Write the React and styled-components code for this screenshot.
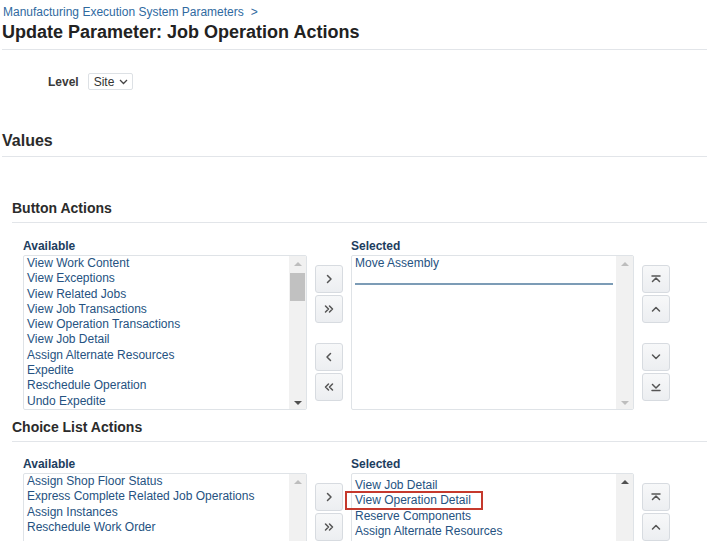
import styled, { createGlobalStyle } from "styled-components";

const GlobalStyle = createGlobalStyle`
  body {
    margin: 0;
    background: #fff;
    font-family: "Liberation Sans", Arial, sans-serif;
  }
`;

const Page = styled.div`
  padding: 5px 0 0 2px;
  height: 536px;
  overflow: hidden;
`;

const Breadcrumb = styled.div`
  font-size: 12px;
  line-height: 15px;
  color: #2f6a9f;
  padding-left: 1px;
  span {
    margin-left: 7px;
  }
`;

const Title = styled.h1`
  margin: 1px 0 0;
  font-size: 18px;
  line-height: 22px;
  font-weight: bold;
  color: #222;
  padding-bottom: 6px;
  border-bottom: 1px solid #e2e5e9;
`;

const LevelRow = styled.div`
  display: flex;
  align-items: center;
  gap: 9px;
  margin-top: 23px;
  padding-left: 46px;
  height: 17px;
`;

const FieldLabel = styled.label`
  font-size: 12px;
  font-weight: bold;
  color: #3a3a3a;
`;

const Select = styled.div`
  display: flex;
  align-items: center;
  gap: 5px;
  height: 17px;
  box-sizing: border-box;
  padding: 0 4px 0 5px;
  border: 1px solid #dde1e5;
  border-radius: 2px;
  font-size: 12px;
  color: #333;
`;

const SectionHeading = styled.h2`
  margin: ${(p) => p.$top}px 0 0;
  font-size: ${(p) => p.$size}px;
  line-height: ${(p) => p.$size + 4}px;
  font-weight: bold;
  color: #2b2b2b;
  padding-bottom: 5px;
  border-bottom: 1px solid #e2e5e9;
`;

const SubSection = styled.section`
  margin-left: 10px;
`;

const Shuttle = styled.div`
  display: grid;
  grid-template-columns: 284px 28px 283px 28px;
  column-gap: 8px;
  margin-top: ${(p) => p.$top}px;
  padding-left: 11px;
`;

const Column = styled.div`
  position: relative;
  display: flex;
  flex-direction: column;
  gap: 2px;
`;

const ListLabel = styled.div`
  font-size: 12px;
  line-height: 14px;
  font-weight: bold;
  color: #1d3d5e;
`;

const ListBox = styled.div`
  display: flex;
  height: 155px;
  box-sizing: border-box;
  border: 1px solid #dfe3e7;
  border-radius: 2px;
  overflow: hidden;
`;

const Items = styled.div`
  flex: 1;
  overflow: hidden;
  padding-top: ${(p) => p.$pad || 0}px;
`;

const Item = styled.div`
  font-size: 12px;
  line-height: 15.3px;
  padding-left: 3px;
  color: #255281;
  white-space: nowrap;
`;

const DropLine = styled.div`
  height: 2px;
  margin: 12px 3px 0;
  background: #7c9cb6;
`;

const ScrollTrack = styled.div`
  width: 17px;
  flex: none;
  background: #f1f1f1;
  display: flex;
  flex-direction: column;
  align-items: center;
  padding: 6px 0 4px;
  box-sizing: border-box;
`;

const Thumb = styled.div`
  width: 15px;
  height: 28px;
  margin-top: 7px;
  background: #c1c1c1;
`;

const Spacer = styled.div`
  flex: 1;
`;

const Arrow = styled.div`
  width: 0;
  height: 0;
  border-left: 4px solid transparent;
  border-right: 4px solid transparent;
  ${(p) =>
    p.$down
      ? `border-top: 4px solid ${p.$dark ? "#505050" : "#bdbdbd"};`
      : `border-bottom: 4px solid ${p.$dark ? "#505050" : "#bdbdbd"};`}
`;

const ButtonCol = styled.div`
  display: flex;
  flex-direction: column;
  gap: 2px;
  padding-top: 26px;
`;

const Gap = styled.div`
  height: 16px;
`;

const IconButton = styled.button`
  width: 28px;
  height: 28px;
  padding: 0;
  display: flex;
  align-items: center;
  justify-content: center;
  background: linear-gradient(#f7f8f9, #eceef1);
  border: 1px solid #d7dbe0;
  border-radius: 3px;
  color: #555;
`;

const Highlight = styled.div`
  position: absolute;
  left: -6px;
  top: 34px;
  width: 138px;
  height: 19px;
  box-sizing: border-box;
  border: 2px solid #c5392d;
`;

const Icon = ({ d }) => (
  <svg width="12" height="12" viewBox="0 0 12 12" fill="none" stroke="currentColor" strokeWidth="1.5" strokeLinecap="round" strokeLinejoin="round">
    <path d={d} />
  </svg>
);

const icons = {
  right: "M4.5 2.5 L8 6 L4.5 9.5",
  rightAll: "M2.5 3 L5.5 6 L2.5 9 M6.5 3 L9.5 6 L6.5 9",
  left: "M7.5 2.5 L4 6 L7.5 9.5",
  leftAll: "M5.5 3 L2.5 6 L5.5 9 M9.5 3 L6.5 6 L9.5 9",
  top: "M2 3 H10 M2.5 8.5 L6 5 L9.5 8.5",
  up: "M2.5 8 L6 4.5 L9.5 8",
  down: "M2.5 4 L6 7.5 L9.5 4",
  bottom: "M2.5 3.5 L6 7 L9.5 3.5 M2 9.5 H10",
};

const Chevron = () => (
  <svg width="9" height="6" viewBox="0 0 9 6" fill="none" stroke="#444" strokeWidth="1.3">
    <path d="M1 1 L4.5 4.5 L8 1" />
  </svg>
);

const Scrollbar = ({ thumb, upDark, downDark }) => (
  <ScrollTrack>
    <Arrow $dark={upDark} />
    {thumb && <Thumb />}
    <Spacer />
    <Arrow $down $dark={downDark} />
  </ScrollTrack>
);

const MoveButtons = ({ pairs }) => (
  <ButtonCol>
    <IconButton><Icon d={icons[pairs[0]]} /></IconButton>
    <IconButton><Icon d={icons[pairs[1]]} /></IconButton>
    <Gap />
    <IconButton><Icon d={icons[pairs[2]]} /></IconButton>
    <IconButton><Icon d={icons[pairs[3]]} /></IconButton>
  </ButtonCol>
);

const buttonAvailable = [
  "View Work Content",
  "View Exceptions",
  "View Related Jobs",
  "View Job Transactions",
  "View Operation Transactions",
  "View Job Detail",
  "Assign Alternate Resources",
  "Expedite",
  "Reschedule Operation",
  "Undo Expedite",
];

const choiceAvailable = [
  "Assign Shop Floor Status",
  "Express Complete Related Job Operations",
  "Assign Instances",
  "Reschedule Work Order",
];

const choiceSelected = [
  "View Job Detail",
  "View Operation Detail",
  "Reserve Components",
  "Assign Alternate Resources",
];

export default function App() {
  return (
    <>
      <GlobalStyle />
      <Page>
        <Breadcrumb>
          Manufacturing Execution System Parameters<span>&gt;</span>
        </Breadcrumb>
        <Title>Update Parameter: Job Operation Actions</Title>

        <LevelRow>
          <FieldLabel>Level</FieldLabel>
          <Select>
            Site <Chevron />
          </Select>
        </LevelRow>

        <SectionHeading $size={16} $top={41}>Values</SectionHeading>

        <SubSection>
          <SectionHeading $size={14} $top={42}>Button Actions</SectionHeading>
          <Shuttle $top={16}>
            <Column>
              <ListLabel>Available</ListLabel>
              <ListBox>
                <Items>
                  {buttonAvailable.map((t) => (
                    <Item key={t}>{t}</Item>
                  ))}
                </Items>
                <Scrollbar thumb downDark />
              </ListBox>
            </Column>
            <MoveButtons pairs={["right", "rightAll", "left", "leftAll"]} />
            <Column>
              <ListLabel>Selected</ListLabel>
              <ListBox>
                <Items>
                  <Item>Move Assembly</Item>
                  <DropLine />
                </Items>
                <Scrollbar />
              </ListBox>
            </Column>
            <MoveButtons pairs={["top", "up", "down", "bottom"]} />
          </Shuttle>

          <SectionHeading $size={14} $top={8}>Choice List Actions</SectionHeading>
          <Shuttle $top={15}>
            <Column>
              <ListLabel>Available</ListLabel>
              <ListBox>
                <Items>
                  {choiceAvailable.map((t) => (
                    <Item key={t}>{t}</Item>
                  ))}
                </Items>
                <Scrollbar />
              </ListBox>
            </Column>
            <MoveButtons pairs={["right", "rightAll", "left", "leftAll"]} />
            <Column>
              <ListLabel>Selected</ListLabel>
              <ListBox>
                <Items $pad={4}>
                  {choiceSelected.map((t) => (
                    <Item key={t}>{t}</Item>
                  ))}
                </Items>
                <Scrollbar upDark />
              </ListBox>
              <Highlight />
            </Column>
            <MoveButtons pairs={["top", "up", "down", "bottom"]} />
          </Shuttle>
        </SubSection>
      </Page>
    </>
  );
}
